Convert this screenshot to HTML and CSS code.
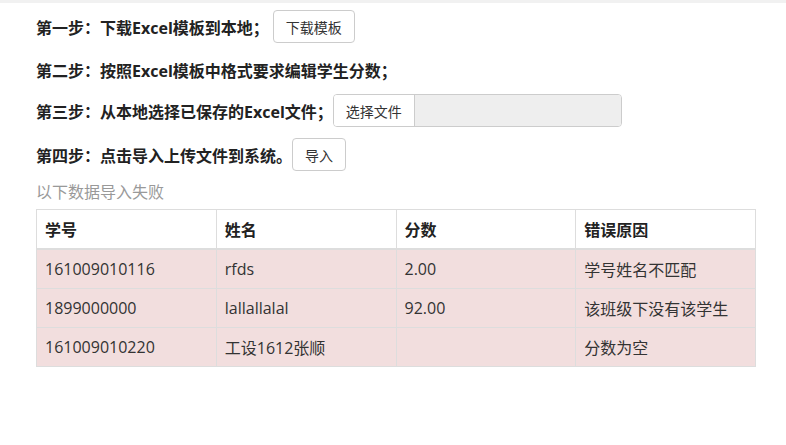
FILE: index.html
```html
<!DOCTYPE html>
<html>
<head>
<meta charset="utf-8">
<link rel="stylesheet" href="styles.css">
</head>
<body>
<div class="topbar"></div>
<div class="page">
  <div class="steps">
    <div class="step"><span class="label label-wide">第一步：下载Excel模板到本地；</span><button class="btn">下载模板</button></div>
    <div class="step step-text"><span class="label">第二步：按照Excel模板中格式要求编辑学生分数；</span></div>
    <div class="step"><span class="label">第三步：从本地选择已保存的Excel文件；</span><div class="file"><span class="file-btn">选择文件</span><span class="file-name"></span></div></div>
    <div class="step"><span class="label">第四步：点击导入上传文件到系统。</span><button class="btn">导入</button></div>
  </div>
  <div class="note">以下数据导入失败</div>
  <table class="tbl">
    <thead>
      <tr><th>学号</th><th>姓名</th><th>分数</th><th>错误原因</th></tr>
    </thead>
    <tbody>
      <tr><td>161009010116</td><td>rfds</td><td>2.00</td><td>学号姓名不匹配</td></tr>
      <tr><td>1899000000</td><td>lallallalal</td><td>92.00</td><td>该班级下没有该学生</td></tr>
      <tr><td>161009010220</td><td>工设1612张顺</td><td></td><td>分数为空</td></tr>
    </tbody>
  </table>
</div>
</body>
</html>
```
FILE: styles.css
```css
html, body {
  margin: 0;
  padding: 0;
  background: #fff;
  font-family: "Open Sans", "Noto Sans CJK SC", sans-serif;
  color: #333;
}
.topbar {
  height: 3px;
  background: #f1f1f1;
}
.page {
  padding: 7px 30px 0 36px;
}
.steps {
  display: flex;
  flex-direction: column;
  gap: 11px;
}
.step {
  display: flex;
  align-items: center;
  height: 33px;
}
.step-text {
  height: 29px;
  padding-top: 3px;
  box-sizing: border-box;
}
.label {
  font-size: 16px;
  font-weight: bold;
  color: #222;
}
.label-wide {
  margin-right: 4px;
}
.btn {
  font-family: "Noto Sans CJK SC", sans-serif;
  font-size: 14px;
  color: #333;
  background: #fff;
  border: 1px solid #ccc;
  border-radius: 4px;
  height: 33px;
  padding: 0 12px;
}
.file {
  display: flex;
  height: 33px;
  border: 1px solid #ccc;
  border-radius: 4px;
  box-sizing: border-box;
  overflow: hidden;
}
.file-btn {
  display: flex;
  align-items: center;
  padding: 0 12px;
  font-family: "Noto Sans CJK SC", sans-serif;
  font-size: 14px;
  color: #333;
  background: #fff;
  border-right: 1px solid #ccc;
}
.file-name {
  width: 206px;
  background: #eee;
}
.note {
  margin-top: 9px;
  font-size: 16px;
  color: #999;
  line-height: 24px;
}
.tbl {
  margin-top: 5px;
  width: 720px;
  border-collapse: collapse;
  font-size: 16px;
  table-layout: fixed;
}
.tbl th, .tbl td {
  border: 1px solid #ddd;
  padding: 0 8px;
  text-align: left;
  height: 38px;
}
.tbl th {
  font-weight: bold;
  color: #222;
  border-bottom: 2px solid #ddd;
  background: #fff;
}
.tbl td {
  background: #f2dede;
  color: #333;
}
```
